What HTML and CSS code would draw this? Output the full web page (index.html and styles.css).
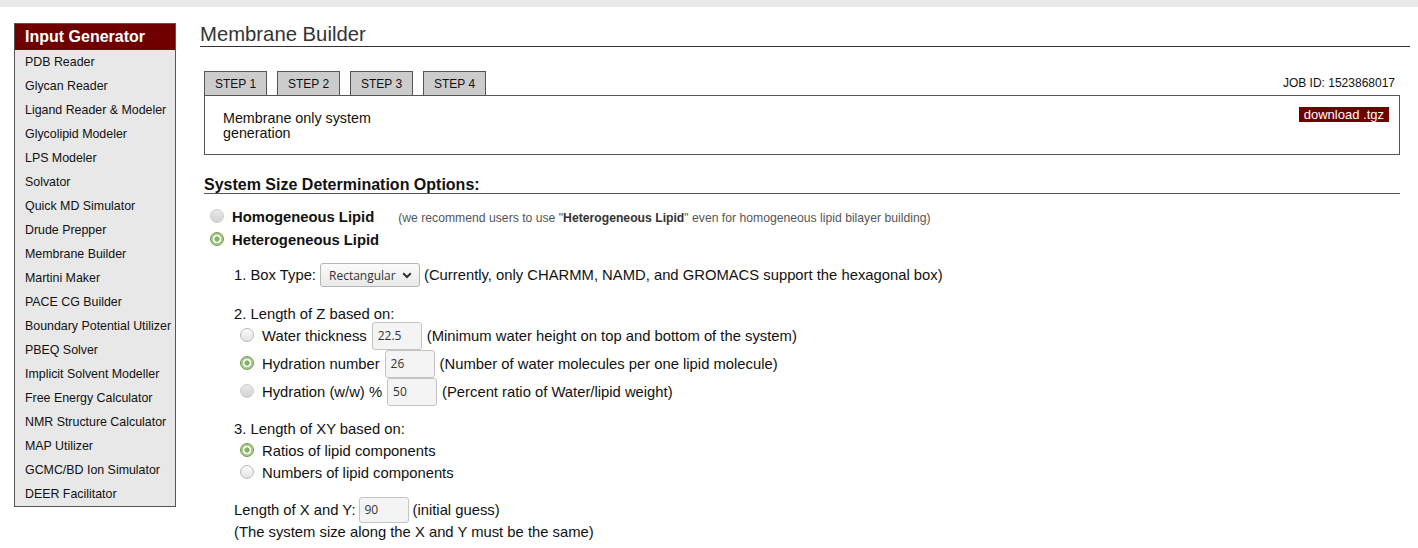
FILE: index.html
```html
<!DOCTYPE html>
<html>
<head>
<meta charset="utf-8">
<link rel="stylesheet" href="styles.css">
</head>
<body>
<div class="topbar"></div>
<div class="layout">
  <nav class="sidebar">
    <div class="side-head">Input Generator</div>
    <ul class="side-list">
      <li>PDB Reader</li>
      <li>Glycan Reader</li>
      <li>Ligand Reader &amp; Modeler</li>
      <li>Glycolipid Modeler</li>
      <li>LPS Modeler</li>
      <li>Solvator</li>
      <li>Quick MD Simulator</li>
      <li>Drude Prepper</li>
      <li>Membrane Builder</li>
      <li>Martini Maker</li>
      <li>PACE CG Builder</li>
      <li>Boundary Potential Utilizer</li>
      <li>PBEQ Solver</li>
      <li>Implicit Solvent Modeller</li>
      <li>Free Energy Calculator</li>
      <li>NMR Structure Calculator</li>
      <li>MAP Utilizer</li>
      <li>GCMC/BD Ion Simulator</li>
      <li>DEER Facilitator</li>
    </ul>
  </nav>
  <main class="main">
    <h1 class="title">Membrane Builder</h1>
    <div class="panel">
      <div class="tabrow">
        <div class="tabs">
          <div class="tab">STEP 1</div>
          <div class="tab">STEP 2</div>
          <div class="tab">STEP 3</div>
          <div class="tab">STEP 4</div>
        </div>
        <div class="jobid">JOB ID: 1523868017</div>
      </div>
      <div class="stepbox">
        <div class="stepdesc">Membrane only system generation</div>
        <span class="download">download .tgz</span>
      </div>

      <h2 class="section">System Size Determination Options:</h2>

      <div class="lipids">
        <div class="lipid-row">
          <span class="radio disabled"></span>
          <span class="lipid-label">Homogeneous Lipid</span>
          <span class="note">(we recommend users to use "<b>Heterogeneous Lipid</b>" even for homogeneous lipid bilayer building)</span>
        </div>
        <div class="lipid-row">
          <span class="radio checked"></span>
          <span class="lipid-label">Heterogeneous Lipid</span>
        </div>
      </div>

      <div class="opts">
        <div class="boxtype">
          <span>1. Box Type:</span>
          <span class="select"><span class="select-text">Rectangular</span><svg class="chev" width="10" height="7" viewBox="0 0 10 7"><path d="M1.2 1.2 L5 5 L8.8 1.2" fill="none" stroke="#333" stroke-width="2"/></svg></span>
          <span>(Currently, only CHARMM, NAMD, and GROMACS support the hexagonal box)</span>
        </div>

        <div class="subhead z-head">2. Length of Z based on:</div>
        <div class="zrow">
          <span class="radio"></span>
          <span>Water thickness</span>
          <span class="field">22.5</span>
          <span>(Minimum water height on top and bottom of the system)</span>
        </div>
        <div class="zrow">
          <span class="radio checked"></span>
          <span>Hydration number</span>
          <span class="field">26</span>
          <span>(Number of water molecules per one lipid molecule)</span>
        </div>
        <div class="zrow">
          <span class="radio disabled"></span>
          <span>Hydration (w/w) %</span>
          <span class="field">50</span>
          <span>(Percent ratio of Water/lipid weight)</span>
        </div>

        <div class="subhead xy-head">3. Length of XY based on:</div>
        <div class="xyrow">
          <span class="radio checked"></span>
          <span>Ratios of lipid components</span>
        </div>
        <div class="xyrow">
          <span class="radio"></span>
          <span>Numbers of lipid components</span>
        </div>

        <div class="lenrow">
          <span class="lenlabel">Length of X and Y:</span>
          <span class="field small">90</span>
          <span>(initial guess)</span>
        </div>
        <div class="lennote">(The system size along the X and Y must be the same)</div>
      </div>
    </div>
  </main>
</div>
</body>
</html>
```

FILE: styles.css
```css
html, body {
  margin: 0;
  padding: 0;
  background: #fff;
  font-family: "Liberation Sans", Arial, sans-serif;
  color: #111;
}

.topbar {
  height: 7px;
  background: #e8e8e8;
}

.layout {
  display: flex;
  align-items: flex-start;
  padding-left: 14px;
  margin-top: 16px;
}

.sidebar {
  width: 162px;
  box-sizing: border-box;
  border: 1px solid #555;
  background: #e8e8e8;
  flex: none;
}

.side-head {
  background: #700000;
  color: #fff;
  font-weight: bold;
  font-size: 16px;
  line-height: 26px;
  padding-left: 10px;
}

.side-list {
  list-style: none;
  margin: 0;
  padding: 0;
}

.side-list li {
  font-size: 12.4px;
  line-height: 24px;
  padding-left: 10px;
  color: #111;
  white-space: nowrap;
}

.main {
  margin-left: 24px;
  width: 1210px;
  flex: none;
}

.title {
  margin: 0;
  font-size: 20.3px;
  font-weight: normal;
  line-height: 23px;
  color: #333;
  border-bottom: 1px solid #333;
}

.panel {
  margin-left: 4px;
  width: 1196px;
}

.tabrow {
  margin-top: 24px;
  display: flex;
  justify-content: space-between;
  align-items: center;
}

.tabs {
  display: flex;
  gap: 10px;
}

.tab {
  width: 63px;
  height: 24px;
  box-sizing: border-box;
  border: 1px solid #555;
  border-bottom: none;
  background: #ccc;
  font-size: 12px;
  line-height: 24px;
  text-align: center;
  color: #111;
}

.jobid {
  font-size: 12px;
  padding-right: 5px;
  color: #111;
}

.stepbox {
  border: 1px solid #555;
  padding: 15px 10px 13px 18px;
  display: flex;
  justify-content: space-between;
  align-items: flex-start;
}

.stepdesc {
  width: 170px;
  font-size: 14.3px;
  line-height: 15px;
  color: #111;
}

.download {
  margin-top: -4px;
  background: #700000;
  color: #fff;
  font-size: 13px;
  line-height: 15px;
  padding: 0 5px;
}

.section {
  margin: 20px 0 0 0;
  padding-top: 2px;
  font-size: 16px;
  font-weight: bold;
  line-height: 16px;
  border-bottom: 1px solid #555;
  color: #111;
}

.lipids {
  margin-top: 12px;
}

.lipid-row {
  display: flex;
  align-items: center;
  height: 22px;
  padding-left: 6px;
}

.lipid-row + .lipid-row {
  height: 24px;
}

.lipid-label {
  margin-left: 8px;
  font-size: 14.8px;
  font-weight: bold;
  color: #111;
}

.note {
  margin-left: 24px;
  font-size: 12.2px;
  color: #555;
  padding-top: 2px;
}

.note b {
  color: #333;
}

.radio {
  display: inline-block;
  width: 14px;
  height: 14px;
  box-sizing: border-box;
  border-radius: 50%;
  border: 1px solid #b8b8b8;
  background: linear-gradient(#fafafa, #e4e4e4);
  flex: none;
  margin-top: -3px;
}

.radio.disabled {
  border-color: #cdcdcd;
  background: linear-gradient(#e8e8e8, #d4d4d4);
}

.radio.checked {
  border: 1px solid #6f9a50;
  background: radial-gradient(circle, #86b264 0, #86b264 2.3px, #fff 3px, #fff 3.8px, #a9cf8c 4.5px, #9cc47c 100%);
}

.opts {
  padding-left: 30px;
  font-size: 14.8px;
  color: #111;
}

.boxtype {
  margin-top: 11px;
  display: flex;
  align-items: center;
  gap: 4px;
  height: 24px;
}

.select {
  display: inline-flex;
  align-items: center;
  justify-content: space-between;
  width: 100px;
  height: 24px;
  box-sizing: border-box;
  border: 1px solid #b5b5b5;
  border-radius: 3px;
  background: linear-gradient(#fbfbfb, #e9e9e9);
  padding: 0 7px 0 8px;
  font-family: "Open Sans", "Noto Sans", sans-serif;
  font-size: 12px;
  color: #333;
}

.chev {
  display: block;
}

.subhead {
  line-height: 16px;
}

.z-head {
  margin-top: 19px;
}

.zrow {
  display: flex;
  align-items: center;
  height: 28px;
  padding-left: 6px;
  gap: 5px;
}

.zrow .radio {
  margin-right: 3px;
}

.field {
  display: inline-block;
  width: 50px;
  height: 28px;
  box-sizing: border-box;
  border: 1px solid #c4c4c4;
  border-radius: 3px;
  background: #f4f4f4;
  font-family: "Open Sans", "Noto Sans", sans-serif;
  font-size: 12px;
  color: #333;
  line-height: 26px;
  padding-left: 5px;
}

.field.small {
  height: 26px;
  line-height: 24px;
}

.xy-head {
  margin-top: 15px;
  margin-bottom: 3px;
}

.xyrow {
  display: flex;
  align-items: center;
  height: 22px;
  padding-left: 6px;
  gap: 8px;
}

.lenrow {
  margin-top: 13px;
  display: flex;
  align-items: center;
  gap: 4px;
  height: 26px;
}

.lenlabel {
  margin-right: -1px;
}

.lennote {
  line-height: 18px;
}
```
